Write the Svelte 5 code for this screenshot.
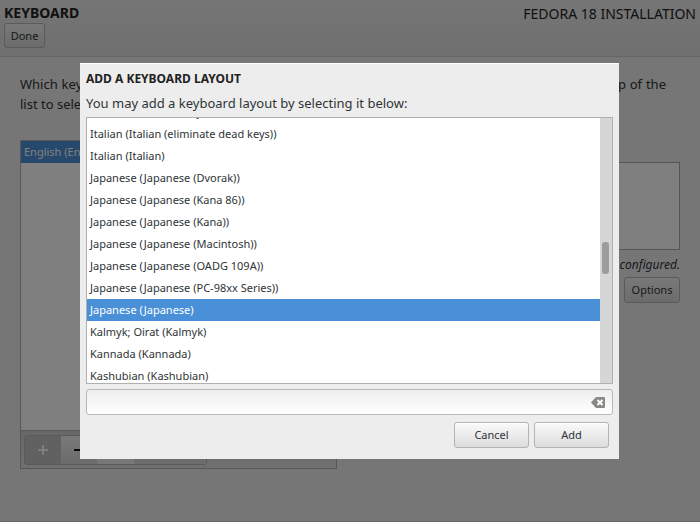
<script>
  const layouts = [
    'Italian (Italian (US keyboard with Italian letters))',
    'Italian (Italian (eliminate dead keys))',
    'Italian (Italian)',
    'Japanese (Japanese (Dvorak))',
    'Japanese (Japanese (Kana 86))',
    'Japanese (Japanese (Kana))',
    'Japanese (Japanese (Macintosh))',
    'Japanese (Japanese (OADG 109A))',
    'Japanese (Japanese (PC-98xx Series))',
    'Japanese (Japanese)',
    'Kalmyk; Oirat (Kalmyk)',
    'Kannada (Kannada)',
    'Kashubian (Kashubian)'
  ];
  let selected = $state('Japanese (Japanese)');
  let filter = $state('');
  let list;
  $effect(() => {
    list.scrollTop = 17;
  });
</script>

<div class="page" inert>
  <header>
    <div>
      <h1>KEYBOARD</h1>
      <button class="btn done">Done</button>
    </div>
    <p class="product">FEDORA 18 INSTALLATION</p>
  </header>
  <main>
    <p class="intro">Which keyboard layouts would you like to use on this system? You may move any layout to the top of the list to select it as the default.</p>
    <div class="columns">
      <section class="chosen">
        <ul><li>English (English (US))</li></ul>
        <div class="toolbar">
          <div class="group">
            <button class="pressed" aria-label="Add layout"><svg width="10" height="10" viewBox="0 0 10 10"><path d="M5 0v10M0 5h10" stroke="#fff" stroke-width="2" /></svg></button>
            <button aria-label="Remove layout"><svg width="10" height="10" viewBox="0 0 10 10"><path d="M0 5h10" stroke="#111" stroke-width="2" /></svg></button>
            <button class="light" aria-label="Move up"></button>
            <button class="flat" aria-label="Move down"></button>
            <button class="flat" aria-label="Preview layout"></button>
          </div>
        </div>
      </section>
      <section class="test">
        <textarea aria-label="Test the layout configuration"></textarea>
        <p class="note">Layout switching not configured.</p>
        <button class="btn options">Options</button>
      </section>
    </div>
  </main>
</div>

<div class="overlay">
  <div class="dialog" role="dialog" aria-modal="true" aria-labelledby="title">
    <h2 id="title">ADD A KEYBOARD LAYOUT</h2>
    <p class="hint">You may add a keyboard layout by selecting it below:</p>
    <div class="picker">
      <ul bind:this={list}>
        {#each layouts as name}
          <li><button class:selected={selected === name} onclick={() => (selected = name)}>{name}</button></li>
        {/each}
      </ul>
      <div class="track"><div class="thumb"></div></div>
    </div>
    <div class="search">
      <input type="text" aria-label="Filter layouts" bind:value={filter} />
      <button aria-label="Clear" onclick={() => (filter = '')}>
        <svg width="14" height="11" viewBox="0 0 14 11"><path d="M0 5.5 4.500 .5Q5 0 6 0h7q1 0 1 1v9q0 1-1 1H6q-1 0-1.500-.5z" fill="#888a85" /><path d="m6.500 3 5 5m0-5-5 5" stroke="#fff" stroke-width="2" /></svg>
      </button>
    </div>
    <div class="actions">
      <button class="btn">Cancel</button>
      <button class="btn">Add</button>
    </div>
  </div>
</div>

<style>
  :global(body) { background: #ededed; }
  * { box-sizing: border-box; }
  h1, h2, p, ul { margin: 0; padding: 0; }
  ul { list-style: none; }
  button, input, textarea { font: inherit; color: inherit; }
  .page, .overlay { font: 11px/22px "Noto Sans", "Open Sans", sans-serif; color: #2e3436; }
  .page { min-height: 100vh; background: #ededed; border-bottom: 1px solid #d4d0d2; }
  header {
    display: flex;
    justify-content: space-between;
    height: 57px;
    padding: 3px 4px;
    background: linear-gradient(#ececec, #dedede);
    border-bottom: 1px solid #cacaca;
  }
  h1 { font-size: 14px; line-height: 20px; color: #222; }
  .product { font-size: 14px; line-height: 22px; color: #222; }
  .btn {
    border: 1px solid #b4b4b4;
    border-radius: 3px;
    background: linear-gradient(#fafafa, #dcdcdc);
    box-shadow: inset 0 1px #fff;
    text-align: center;
    padding: 0;
  }
  .page .btn { background: linear-gradient(#f2f2f2, #d8d8d8); box-shadow: none; }
  .done { display: block; width: 41px; height: 25px; }
  main { padding: 17px 20px 0; }
  .intro { padding-right: 14px; font-size: 13px; line-height: 20px; text-align: justify; }
  .columns { display: flex; justify-content: space-between; margin-top: 26px; }
  .chosen { flex: 0 1 317px; border: 1px solid #b0b0b0; }
  .chosen ul { height: 289px; background: #fff; }
  .chosen li { padding: 0 3px; background: #4a90d9; color: #fff; }
  .toolbar { height: 38px; padding: 4px 3px; background: linear-gradient(#cfcfcf, #e0e0e0); border-top: 1px solid #b0b0b0; }
  .group { display: flex; width: 183px; height: 30px; border: 1px solid #b4b4b4; border-radius: 3px; background: #d6d6d6; }
  .group button { flex: 1; display: grid; place-items: center; border: 0; padding: 0; background: linear-gradient(#f4f4f4, #d6d6d6); }
  .group .pressed { background: #c2c2c2; }
  .group .light { background: #f0f0f0; }
  .group .flat { background: #dadada; }
  .test { flex: 0 1 317px; display: flex; flex-direction: column; align-items: flex-end; padding-top: 22px; }
  textarea { display: block; width: 100%; height: 88px; border: 1px solid #a8a8a8; background: #fff; resize: none; }
  .note { margin: 4px 0 1px; font-size: 12px; font-style: italic; }
  .options { width: 56px; height: 26px; }
  .overlay { position: fixed; inset: 0; display: grid; place-items: center; padding-right: 1px; background: rgba(0, 0, 0, 0.5); }
  .dialog { width: 77%; min-width: 539px; padding: 5px 6px 11px; background: #ededed; border-top: 1px solid #fff; }
  h2 { font-size: 12px; line-height: 20px; color: #222; }
  .hint { font-size: 13px; line-height: 28px; }
  .picker { display: flex; height: 267px; border: 1px solid #b0b0b0; background: #fff; }
  .picker ul { flex: 1; overflow-y: scroll; scrollbar-width: none; }
  .picker li button { display: block; width: 100%; height: 22px; padding: 0 3px; border: 0; background: none; text-align: left; }
  .picker .selected { background: #4a90d9; color: #fff; }
  .track { width: 12px; padding: 124px 3px 0 2px; background: #d6d6d6; }
  .thumb { height: 32px; border-radius: 3px; background: #9c9c9c; }
  .search { display: flex; align-items: center; height: 26px; margin-top: 5px; padding-right: 7px; border: 1px solid #b8b8b8; border-radius: 3px; background: linear-gradient(#eee, #fff); }
  .search input { flex: 1; border: 0; outline: 0; background: none; }
  .search button { display: grid; border: 0; padding: 0; background: none; }
  .actions { display: flex; justify-content: flex-end; gap: 5px; margin-top: 7px; padding-right: 4px; }
  .actions .btn { width: 75px; height: 26px; }
</style>
